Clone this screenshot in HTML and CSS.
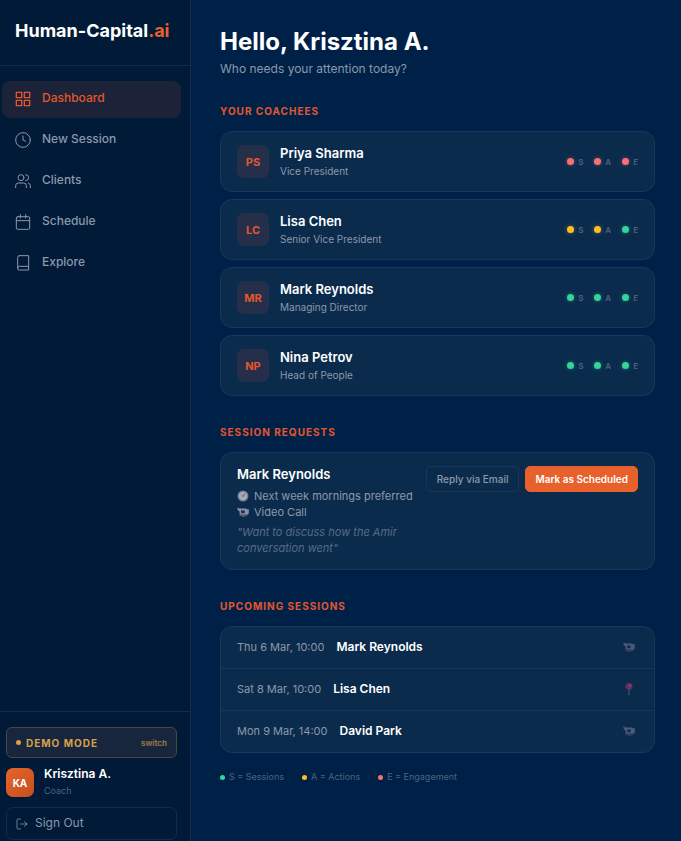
FILE: index.html
```html
<!DOCTYPE html>
<html lang="en">
<head>
<meta charset="utf-8">
<meta name="viewport" content="width=device-width, initial-scale=1">
<title>Human-Capital.ai</title>
<link rel="stylesheet" href="styles.css">
</head>
<body>
<svg class="sprite" aria-hidden="true">
  <symbol id="camera" viewBox="0 0 12 12">
    <path d="M.3 1.500 2.500 2.600H9.400v.6H11.800v4.200L10.400 8.800H2.600V5.400L.8 4.200z" fill="#8792a8"/>
    <path d="M4 4.400h3.800v2.800H4z" fill="#26304f"/>
    <path d="M2.600 8.600h7.400v1.400H8.400v.8H4.400v-.8H2.600z" fill="#5d5577"/>
  </symbol>
  <symbol id="pin" viewBox="0 0 12 12">
    <path d="M5.600 6h.8v6h-.8z" fill="#a9b4c6"/>
    <circle cx="6" cy="3.400" r="3.400" fill="#c2346f"/>
    <circle cx="7" cy="2.400" r="1" fill="#e890b0"/>
  </symbol>
</svg>
<div class="app">
  <aside class="sidebar">
    <div class="brand">Human-Capital<span class="accent">.ai</span></div>
    <nav class="nav">
      <a class="nav-item active" href="#"><svg class="icon" viewBox="0 0 24 24"><rect x="2" y="2" width="8" height="8"/><rect x="14" y="2" width="8" height="8"/><rect x="2" y="14" width="8" height="8"/><rect x="14" y="14" width="8" height="8"/></svg>Dashboard</a>
      <a class="nav-item" href="#"><svg class="icon" viewBox="0 0 24 24"><circle cx="12" cy="12" r="11"/><path d="M12 6v6l4 2"/></svg>New Session</a>
      <a class="nav-item" href="#"><svg class="icon" viewBox="0 0 24 24"><path d="M17 22v-3a4 4 0 0 0-4-4H5a4 4 0 0 0-4 4v3"/><circle cx="9" cy="7" r="4.500"/><path d="M23 22v-3a4 4 0 0 0-3-3.870M16 2.500a4.500 4.500 0 0 1 0 9"/></svg>Clients</a>
      <a class="nav-item" href="#"><svg class="icon" viewBox="0 0 24 24"><rect x="2" y="4" width="20" height="19" rx="2"/><path d="M16 1v5M8 1v5M2 10h20"/></svg>Schedule</a>
      <a class="nav-item" href="#"><svg class="icon" viewBox="0 0 24 24"><path d="M4 19.500A2.500 2.500 0 0 1 6.500 17H20"/><path d="M6.500 1H20.500v21.500H6.500A2.500 2.500 0 0 1 4 19.500v-16A2.500 2.500 0 0 1 6.500 1z"/></svg>Explore</a>
    </nav>
    <div class="account">
      <button class="demo" type="button"><span class="demo-dot"></span>DEMO MODE<span class="switch">switch</span></button>
      <div class="user">
        <span class="user-avatar">KA</span>
        <div><div class="user-name">Krisztina A.</div><div class="user-role">Coach</div></div>
      </div>
      <button class="sign-out" type="button"><svg class="icon small" viewBox="0 0 24 24"><path d="M9 22H4a2 2 0 0 1-2-2V4a2 2 0 0 1 2-2h5M17 17l5-5-5-5M22 12H9"/></svg>Sign Out</button>
    </div>
  </aside>
  <main class="main">
    <h1>Hello, Krisztina A.</h1>
    <p class="subtitle">Who needs your attention today?</p>

    <h2>Your Coachees</h2>
    <div class="coachees">
      <a class="card coachee" href="#">
        <span class="avatar">PS</span>
        <span class="person"><span class="name">Priya Sharma</span><span class="role">Vice President</span></span>
        <span class="signals"><span class="signal red">S</span><span class="signal red">A</span><span class="signal red">E</span></span>
      </a>
      <a class="card coachee" href="#">
        <span class="avatar">LC</span>
        <span class="person"><span class="name">Lisa Chen</span><span class="role">Senior Vice President</span></span>
        <span class="signals"><span class="signal yellow">S</span><span class="signal yellow">A</span><span class="signal green">E</span></span>
      </a>
      <a class="card coachee" href="#">
        <span class="avatar">MR</span>
        <span class="person"><span class="name">Mark Reynolds</span><span class="role">Managing Director</span></span>
        <span class="signals"><span class="signal green">S</span><span class="signal green">A</span><span class="signal green">E</span></span>
      </a>
      <a class="card coachee" href="#">
        <span class="avatar">NP</span>
        <span class="person"><span class="name">Nina Petrov</span><span class="role">Head of People</span></span>
        <span class="signals"><span class="signal green">S</span><span class="signal green">A</span><span class="signal green">E</span></span>
      </a>
    </div>

    <h2>Session Requests</h2>
    <div class="card request">
      <div class="request-info">
        <div class="name">Mark Reynolds</div>
        <div class="detail"><svg class="glyph" viewBox="0 0 12 12"><circle cx="6" cy="6" r="5.500" fill="#737d91"/><circle cx="6" cy="6" r="4.200" fill="#a3abb8"/><path d="M6 6.500 8 3.500" stroke="#8a4a5e" fill="none"/><path d="M6 6.500 5 5.500" stroke="#4b566c" fill="none"/></svg>Next week mornings preferred</div>
        <div class="detail"><svg class="glyph"><use href="#camera"/></svg>Video Call</div>
        <p class="quote">"Want to discuss how the Amir conversation went"</p>
      </div>
      <div class="actions">
        <button class="btn" type="button">Reply via Email</button>
        <button class="btn primary" type="button">Mark as Scheduled</button>
      </div>
    </div>

    <h2>Upcoming Sessions</h2>
    <ul class="card sessions">
      <li><time>Thu 6 Mar, 10:00</time><span class="who">Mark Reynolds</span><svg class="glyph faded"><use href="#camera"/></svg></li>
      <li><time>Sat 8 Mar, 10:00</time><span class="who">Lisa Chen</span><svg class="glyph faded"><use href="#pin"/></svg></li>
      <li><time>Mon 9 Mar, 14:00</time><span class="who">David Park</span><svg class="glyph faded"><use href="#camera"/></svg></li>
    </ul>

    <div class="legend">
      <span class="key green">S = Sessions</span>
      <span class="key yellow">A = Actions</span>
      <span class="key red">E = Engagement</span>
    </div>
  </main>
</div>
</body>
</html>
```
FILE: styles.css
```css
:root {
  --orange: #e8602c;
  --line: #19375a;
  --muted: #8b98a9;
  --dim: #4d627e;
}
* { box-sizing: border-box; }
body {
  margin: 0;
  background: #002147;
  color: #fff;
  font-family: Inter, "Liberation Sans", sans-serif;
  font-size: 12px;
  line-height: 16px;
}
a { color: inherit; text-decoration: none; }
button { font: inherit; cursor: pointer; }
.sprite { display: none; }
.app { display: flex; min-height: 100vh; }

.sidebar {
  flex: none;
  display: flex;
  flex-direction: column;
  width: 191px;
  height: 100vh;
  position: sticky;
  top: 0;
  background: #001a38;
  border-right: 1px solid #122c4c;
}
.brand {
  padding: 19px 15px 22px;
  border-bottom: 1px solid #122c4c;
  font-size: 18px;
  line-height: 24px;
  font-weight: 700;
}
.accent { color: var(--orange); }
.nav {
  flex: 1;
  display: flex;
  flex-direction: column;
  gap: 4px;
  padding: 15px 9px 0 2px;
}
.nav-item {
  display: flex;
  align-items: center;
  gap: 11px;
  height: 37px;
  padding: 0 13px 3px;
  border-radius: 8px;
  color: var(--muted);
  font-weight: 500;
}
.nav-item.active { background: #1c2237; color: #e2572f; }
.icon {
  width: 16px;
  height: 16px;
  margin-top: 2px;
  fill: none;
  stroke: currentColor;
  stroke-width: 1.5;
  stroke-linecap: round;
  stroke-linejoin: round;
}
.active .icon { stroke-width: 2; }
.icon.small { width: 12px; height: 12px; }
.account {
  display: flex;
  flex-direction: column;
  gap: 10px;
  padding: 15px 13px 1px 6px;
  border-top: 1px solid #122c4c;
}
.demo {
  display: flex;
  align-items: center;
  height: 31px;
  padding: 0 9px;
  border: 1px solid #4a4640;
  border-radius: 6px;
  background: #17263c;
  color: #d9a04e;
  font-size: 10px;
  font-weight: 700;
  letter-spacing: 1px;
}
.demo-dot { width: 5px; height: 5px; margin-right: 5px; border-radius: 50%; background: currentColor; }
.switch { margin-left: auto; color: #93754a; font-size: 8px; font-weight: 700; letter-spacing: 0; }
.user { display: flex; align-items: center; gap: 10px; height: 29px; }
.user-avatar {
  display: grid;
  place-items: center;
  width: 28px;
  height: 29px;
  border-radius: 7px;
  background: linear-gradient(135deg, #e8632b, #c2501f);
  font-size: 10px;
  font-weight: 700;
}
.user-name { font-weight: 600; }
.user-role { margin-top: 1px; color: var(--dim); font-size: 9px; }
.sign-out {
  display: flex;
  align-items: center;
  gap: 7px;
  height: 33px;
  padding: 0 9px 2px;
  border: 1px solid #122c4c;
  border-radius: 7px;
  background: none;
  color: var(--muted);
}

.main { flex: 1; min-width: 0; padding: 27px 26px 27px 29px; }
h1 { margin: 0; font-size: 24px; line-height: 30px; font-weight: 700; }
.subtitle { margin: 4px 0 0; color: var(--muted); }
h2 {
  margin: 30px 0 14px;
  color: #e2572f;
  font-size: 10px;
  line-height: 12px;
  font-weight: 700;
  letter-spacing: 1px;
  text-transform: uppercase;
}
.subtitle + h2 { margin-top: 28px; }
.card { border: 1px solid var(--line); border-radius: 12px; background: #0b2b4d; }
.coachees { display: flex; flex-direction: column; gap: 7px; }
.coachee { display: flex; align-items: center; gap: 11px; height: 61px; padding: 0 16px; }
.avatar {
  display: grid;
  place-items: center;
  width: 32px;
  height: 33px;
  border-radius: 7px;
  background: #252f4a;
  color: #e2572f;
  font-size: 11px;
  font-weight: 700;
}
.person { flex: 1; display: flex; flex-direction: column; gap: 2px; }
.name { font-size: 13px; font-weight: 600; }
.role { color: var(--muted); font-size: 10px; }
.signals { display: flex; gap: 11px; }
.signal { display: flex; align-items: center; gap: 4px; color: var(--dim); font-size: 8px; font-weight: 600; }
.signal::before {
  content: "";
  width: 7px;
  height: 7px;
  border-radius: 50%;
  background: var(--state);
  box-shadow: 0 0 4px color-mix(in srgb, var(--state) 40%, transparent);
}
.red { --state: #f87171; }
.yellow { --state: #fbbf24; }
.green { --state: #34d399; }

.request { display: flex; justify-content: space-between; gap: 12px; padding: 13px 16px; }
.request-info { flex: 1; min-width: 0; }
.detail {
  display: flex;
  align-items: center;
  gap: 5px;
  color: var(--muted);
  font-size: 11px;
  white-space: nowrap;
}
.request .name { margin-bottom: 6px; }
.glyph { flex: none; width: 12px; height: 12px; }
.quote { margin: 4px 0 0; color: #566b86; font-size: 11px; font-style: italic; }
.actions { flex: none; display: flex; align-items: flex-start; gap: 6px; }
.btn {
  height: 26px;
  padding: 0 10px;
  border: 1px solid var(--line);
  border-radius: 5px;
  background: none;
  color: var(--muted);
  font-size: 10px;
  font-weight: 500;
}
.btn.primary {
  padding: 0 9px;
  border-color: var(--orange);
  background: var(--orange);
  color: #fff;
  font-weight: 600;
}

.sessions { margin: 0; padding: 0; list-style: none; }
.sessions li { display: flex; align-items: center; gap: 12px; height: 41px; padding: 0 19px 1px 16px; }
.sessions li + li { height: 42px; border-top: 1px solid var(--line); }
time { color: var(--muted); font-size: 11px; }
.who { flex: 1; font-weight: 600; }
.faded { opacity: .5; }
.legend { display: flex; gap: 18px; margin-top: 16px; color: var(--dim); font-size: 9px; }
.key { display: flex; align-items: center; gap: 4px; }
.key::before { content: ""; width: 5px; height: 5px; border-radius: 50%; background: var(--state); }
```
